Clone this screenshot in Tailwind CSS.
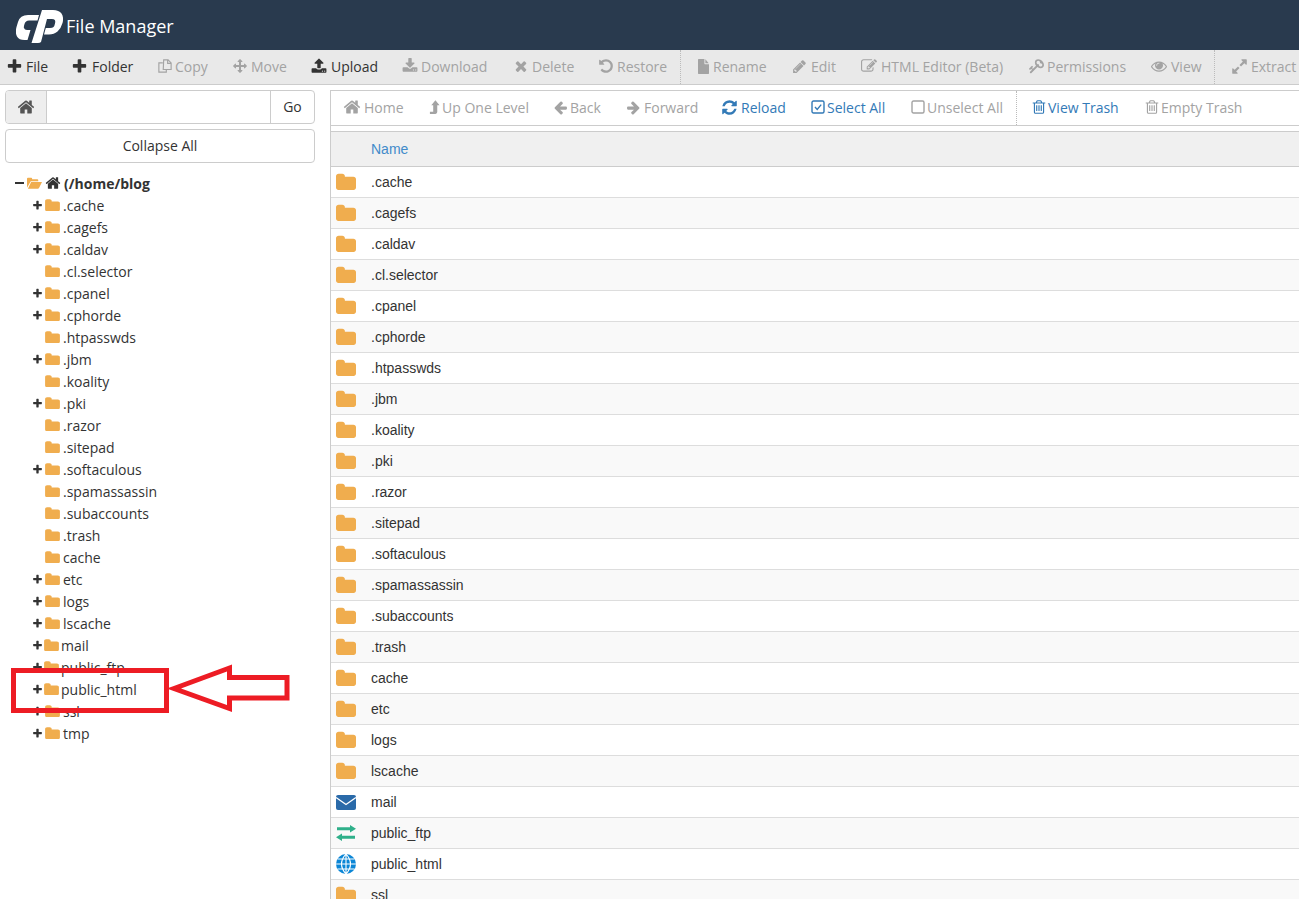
<!DOCTYPE html>
<html lang="en">
<head>
    <meta charset="UTF-8">
    <meta name="viewport" content="width=device-width, initial-scale=1.0">
    <title>cPanel File Manager</title>
    <script src="https://cdn.jsdelivr.net/npm/@tailwindcss/browser@4"></script>
</head>
<body class="bg-white h-[899px] overflow-hidden relative font-['Open_Sans','Noto_Sans',sans-serif] text-[14px] text-[#333]">
    <!-- Icon set -->
    <svg class="hidden">
        <symbol id="i-plus" viewBox="0 0 1792 1792"><path d="M1600 736v192q0 40-28 68t-68 28h-416v416q0 40-28 68t-68 28h-192q-40 0-68-28t-28-68v-416h-416q-40 0-68-28t-28-68v-192q0-40 28-68t68-28h416v-416q0-40 28-68t68-28h192q40 0 68 28t28 68v416h416q40 0 68 28t28 68z"/></symbol>
        <symbol id="i-folder" viewBox="0 0 1728 1400"><path d="M1728 508v704q0 92-66 158t-158 66h-1280q-92 0-158-66t-66-158v-960q0-92 66-158t158-66h320q92 0 158 66t66 158v32h736q92 0 158 66t66 158z"/></symbol>
        <symbol id="i-home" viewBox="0 0 1792 1792"><path d="M1472 992v480q0 26-19 45t-45 19h-384v-384h-256v384h-384q-26 0-45-19t-19-45v-480q0-1 .5-3t.5-3l575-474 575 474q1 2 1 6zm223-69l-62 74q-8 9-21 11h-3q-13 0-21-7l-692-577-692 577q-12 8-24 7-13-2-21-11l-62-74q-8-10-7-23.5t11-21.5l719-599q32-26 76-26t76 26l244 204v-195q0-14 9-23t23-9h192q14 0 23 9t9 23v408l219 182q10 8 11 21.5t-7 23.5z"/></symbol>
        <symbol id="i-left" viewBox="0 0 1792 1792"><path d="M1664 896v128q0 53-32.5 90.5t-84.5 37.5h-704l293 294q38 36 38 90t-38 90l-75 76q-38 38-90 38-53 0-91-38l-651-652q-37-37-37-90 0-52 37-91l651-650q38-38 91-38 52 0 90 38l75 74q38 38 38 91t-38 91l-293 293h704q52 0 84.5 37.5t32.5 90.5z"/></symbol>
        <symbol id="i-right" viewBox="0 0 1792 1792"><path d="M1600 960q0 54-37 91l-651 651q-39 37-91 37-51 0-90-37l-75-75q-38-38-38-91t38-91l293-293h-704q-52 0-84.5-37.5t-32.5-90.5v-128q0-53 32.5-90.5t84.5-37.5h704l-293-294q-38-36-38-90t38-90l75-75q38-38 90-38 53 0 91 38l651 651q37 35 37 90z"/></symbol>
        <symbol id="i-times" viewBox="0 0 1792 1792"><path d="M1490 1322q0 40-28 68l-136 136q-28 28-68 28t-68-28l-294-294-294 294q-28 28-68 28t-68-28l-136-136q-28-28-28-68t28-68l294-294-294-294q-28-28-28-68t28-68l136-136q28-28 68-28t68 28l294 294 294-294q28-28 68-28t68 28l136 136q28 28 28 68t-28 68l-294 294 294 294q28 28 28 68z"/></symbol>
        <symbol id="i-file" viewBox="128 0 1536 1792" preserveAspectRatio="none"><path d="M1152 512v-472q22 14 36 28l408 408q14 14 28 36h-472zm-128 32q0 40 28 68t68 28h544v1056q0 40-28 68t-68 28h-1344q-40 0-68-28t-28-68v-1600q0-40 28-68t68-28h800v544z"/></symbol>
        <symbol id="i-pencil" viewBox="0 0 1792 1792"><path d="M491 1536l91-91-235-235-91 91v107h128v128h107zm523-928q0-22-22-22-10 0-17 7l-542 542q-7 7-7 17 0 22 22 22 10 0 17-7l542-542q7-7 7-17zm-54-192l416 416-832 832h-416v-416zm683 96q0 53-37 90l-166 166-416-416 166-165q36-38 90-38 53 0 91 38l235 234q37 39 37 91z"/></symbol>
        <symbol id="i-edit" viewBox="0 0 1792 1792"><path d="M888 1184l116-116-152-152-116 116v56h96v96h56zm440-720q-16-16-33 1l-350 350q-17 17-1 33t33-1l350-350q17-17 1-33zm80 594v190q0 119-84.5 203.5t-203.5 84.5h-832q-119 0-203.5-84.5t-84.5-203.5v-832q0-119 84.5-203.5t203.5-84.5h832q63 0 117 25 15 7 18 23 3 17-9 29l-49 49q-14 14-32 8-23-6-45-6h-832q-66 0-113 47t-47 113v832q0 66 47 113t113 47h832q66 0 113-47t47-113v-126q0-13 9-22l64-64q15-15 35-7t20 29zm-96-738l288 288-672 672h-288v-288zm444 132l-92 92-288-288 92-92q28-28 68-28t68 28l152 152q28 28 28 68t-28 68z"/></symbol>
        <symbol id="i-refresh" viewBox="0 0 1792 1792"><path d="M1639 1056q0 5-1 7-64 268-268 434.5t-478 166.5q-146 0-282.5-55t-243.5-157l-129 129q-19 19-45 19t-45-19-19-45v-448q0-26 19-45t45-19h448q26 0 45 19t19 45-19 45l-137 137q71 66 161 102t187 36q134 0 250-65t186-179q11-17 53-117 8-23 30-23h192q13 0 22.5 9.5t9.5 22.5zm25-800v448q0 26-19 45t-45 19h-448q-26 0-45-19t-19-45 19-45l138-138q-148-137-349-137-134 0-250 65t-186 179q-11 17-53 117-8 23-30 23h-199q-13 0-22.5-9.5t-9.5-22.5v-7q65-268 270-434.5t480-166.5q146 0 284 55.5t245 156.5l130-129q19-19 45-19t45 19 19 45z"/></symbol>
        <symbol id="i-eye" viewBox="0 0 1792 1792"><path d="M1664 960q-152-236-381-353 61 104 61 225 0 185-131.5 316.5t-316.5 131.5-316.5-131.5-131.5-316.5q0-121 61-225-229 117-381 353 133 205 333.5 326.5t434.5 121.5 434.5-121.5 333.5-326.5zm-720-384q0-20-14-34t-34-14q-125 0-214.5 89.5t-89.5 214.5q0 20 14 34t34 14 34-14 14-34q0-86 61-147t147-61q20 0 34-14t14-34zm848 384q0 34-20 69-140 230-376.5 368.5t-499.5 138.5-499.5-139-376.5-368q-20-35-20-69t20-69q140-229 376.5-368t499.5-139 499.5 139 376.5 368q20 35 20 69z"/></symbol>
        <symbol id="i-key" viewBox="0 0 1792 1792"><path transform="matrix(-1 0 0 1 1792 0)" d="M832 512q0-80-56-136t-136-56-136 56-56 136q0 42 19 83-41-19-83-19-80 0-136 56t-56 136 56 136 136 56 136-56 56-136q0-42-19-83 41 19 83 19 80 0 136-56t56-136zm851 704q0 17-49 66t-66 49q-9 0-28.5-16t-36.5-33-38.5-40-24.5-26l-96 96 220 220q28 28 28 68 0 42-39 81t-81 39q-40 0-68-28l-671-671q-176 131-365 131-163 0-265.5-102.5t-102.5-265.5q0-160 95-313t248-248 313-95q163 0 265.5 102.5t102.5 265.5q0 189-131 365l355 355 96-96q-3-3-26-24.5t-40-38.5-33-36.5-16-28.5q0-17 49-66t66-49q13 0 23 10 6 6 46 44.5t82 79.5 86.5 86 73 78 28.5 41z"/></symbol>
        <symbol id="i-undo" viewBox="0 0 1792 1792"><path d="M1664 896q0 156-61 298t-164 245-245 164-298 61q-172 0-327-72.5t-264-204.5q-7-10-6.5-22.5t8.5-20.5l137-138q10-9 25-9 16 2 23 12 73 95 179 147t225 52q104 0 198.5-40.5t163.5-109.5 109.5-163.5 40.5-198.5-40.5-198.5-109.5-163.5-163.5-109.5-198.5-40.5q-98 0-188 35.5t-160 101.5l137 138q31 30 14 69-17 40-59 40h-448q-26 0-45-19t-19-45v-448q0-42 40-59 39-17 69 14l130 129q107-101 244.5-156.5t284.5-55.5q156 0 298 61t245 164 164 245 61 298z"/></symbol>
        <symbol id="i-move" viewBox="0 0 1792 1792"><path d="M1792 896q0 26-19 45l-256 256q-19 19-45 19t-45-19-19-45v-128h-384v384h128q26 0 45 19t19 45-19 45l-256 256q-19 19-45 19t-45-19l-256-256q-19-19-19-45t19-45 45-19h128v-384h-384v128q0 26-19 45t-45 19-45-19l-256-256q-19-19-19-45t19-45l256-256q19-19 45-19t45 19 19 45v128h384v-384h-128q-26 0-45-19t-19-45 19-45l256-256q19-19 45-19t45 19l256 256q19 19 19 45t-19 45-45 19h-128v384h384v-128q0-26 19-45t45-19 45 19l256 256q19 19 19 45z"/></symbol>
        <symbol id="i-upload" viewBox="0 0 1792 1792"><path d="M1344 1472q0-26-19-45t-45-19-45 19-19 45 19 45 45 19 45-19 19-45zm256 0q0-26-19-45t-45-19-45 19-19 45 19 45 45 19 45-19 19-45zm128-224v320q0 40-28 68t-68 28h-1472q-40 0-68-28t-28-68v-320q0-40 28-68t68-28h427q21 56 70.5 92t110.5 36h256q61 0 110.5-36t70.5-92h427q40 0 68 28t28 68zm-325-648q-17 40-59 40h-256v448q0 26-19 45t-45 19h-256q-26 0-45-19t-19-45v-448h-256q-42 0-59-40-17-39 14-69l448-448q18-19 45-19t45 19l448 448q31 30 14 69z"/></symbol>
        <symbol id="i-download" viewBox="0 0 1792 1792"><path d="M1344 1344q0-26-19-45t-45-19-45 19-19 45 19 45 45 19 45-19 19-45zm256 0q0-26-19-45t-45-19-45 19-19 45 19 45 45 19 45-19 19-45zm128-224v320q0 40-28 68t-68 28h-1472q-40 0-68-28t-28-68v-320q0-40 28-68t68-28h465l135 136q58 56 136 56t136-56l136-136h464q40 0 68 28t28 68zm-325-569q17 41-14 70l-448 448q-18 19-45 19t-45-19l-448-448q-31-29-14-70 17-39 59-39h256v-448q0-26 19-45t45-19h256q26 0 45 19t19 45v448h256q42 0 59 39z"/></symbol>
        <symbol id="i-trash" viewBox="0 0 1792 1792"><path d="M704 736v576q0 14-9 23t-23 9h-64q-14 0-23-9t-9-23v-576q0-14 9-23t23-9h64q14 0 23 9t9 23zm256 0v576q0 14-9 23t-23 9h-64q-14 0-23-9t-9-23v-576q0-14 9-23t23-9h64q14 0 23 9t9 23zm256 0v576q0 14-9 23t-23 9h-64q-14 0-23-9t-9-23v-576q0-14 9-23t23-9h64q14 0 23 9t9 23zm128 724v-948h-896v948q0 22 7 40.5t14.5 27 10.5 8.5h832q3 0 10.5-8.5t14.5-27 7-40.5zm-672-1076h448l-48-117q-7-9-17-11h-317q-10 2-17 11zm928 32v64q0 14-9 23t-23 9h-96v948q0 83-47 143.5t-113 60.5h-832q-66 0-113-58.5t-47-141.5v-952h-96q-14 0-23-9t-9-23v-64q0-14 9-23t23-9h309l70-167q15-37 54-63t79-26h320q40 0 79 26t54 63l70 167h309q14 0 23 9t9 23z"/></symbol>
        <symbol id="i-expand" viewBox="0 0 1792 1792"><path d="M883 1056q0 13-10 23l-332 332 144 144q19 19 19 45t-19 45-45 19h-448q-26 0-45-19t-19-45v-448q0-26 19-45t45-19 45 19l144 144 332-332q10-10 23-10t23 10l114 114q10 10 10 23zm781-864v448q0 26-19 45t-45 19-45-19l-144-144-332 332q-10 10-23 10t-23-10l-114-114q-10-10-10-23t10-23l332-332-144-144q-19-19-19-45t19-45 45-19h448q26 0 45 19t19 45z"/></symbol>
        <symbol id="i-copy" viewBox="0 0 16 16"><path fill="none" stroke="currentColor" stroke-width="1.300" d="M6.500 1h5l3.500 3.500v7.500h-9zM11 1v4h4M5.500 4.500H1v10.500h8.500v-3"/></symbol>
        <symbol id="i-up" viewBox="0 0 12 16"><path d="M7 0l4.500 5.500H9V13q0 2-2 2H1v-2.300h3.600V5.500H2.500z"/></symbol>
        <symbol id="i-check" viewBox="0 0 14 14"><rect x="1" y="1" width="12" height="12" rx="1.500" fill="none" stroke="currentColor" stroke-width="1.400"/><path d="M4 7l2.200 2.400L10.200 4.600" fill="none" stroke="currentColor" stroke-width="1.400"/></symbol>
        <symbol id="i-square" viewBox="0 0 14 14"><rect x="1" y="1" width="12" height="12" rx="1.500" fill="none" stroke="currentColor" stroke-width="1.400"/></symbol>
        <symbol id="i-open" viewBox="0 0 16 12"><path d="M0 11V1.500Q0 .5 1 .5h3.500q1 0 1 1V2H11q1 0 1 1v1H4L0 11zM1 12l3.400-7H16l-3.200 6.200q-.4.800-1.300.8z"/></symbol>
    </svg>

    <!-- Header -->
    <header class="h-[50px] bg-[#293a4e] flex items-center pl-[16px]">
        <svg class="w-[47px] h-[34px] mr-[3px] mt-[1px] text-white" viewBox="0 0 47 34" fill="currentColor">
            <path d="M12 6h11l-1.500 5.500H13q-3.500 0-4.500 3.500t-.5 4q.5 2 3 2h3.500L11.500 31H8.500Q3 31 1 27.500T.5 18l1.500-5Q4 6 12 6z"/>
            <path d="M26 1h11q6 0 8.500 3.500t1 9.500q-1.500 5.500-5 8.500T33 25.500h-5l1.800-6.500H34q2.500 0 3.500-1t1.500-3.500q.6-2.500-.2-3.500t-3-1h-4.800L25 33q-1 1-3 1h-6.500z"/>
        </svg>
        <span class="text-[18px] text-white mt-[2px]">File Manager</span>
    </header>

    <!-- Main toolbar -->
    <div class="h-[35px] bg-[#e9e9e9] border-b border-[#ccc] flex items-center pl-[8px] whitespace-nowrap overflow-hidden text-[#a3a3a3]">
        <div class="flex items-center h-full pb-[2px]">
            <a class="flex items-center w-[65px] text-[#333]"><span class="flex w-[18px]"><svg class="w-[17px] h-[17px] -ml-[2px] fill-current"><use href="#i-plus"/></svg></span>File</a>
            <a class="flex items-center w-[85px] text-[#333]"><span class="flex w-[19px]"><svg class="w-[17px] h-[17px] -ml-[2px] fill-current"><use href="#i-plus"/></svg></span>Folder</a>
            <a class="flex items-center w-[75px]"><span class="flex w-[17px]"><svg class="w-[14px] h-[14px]"><use href="#i-copy"/></svg></span>Copy</a>
            <a class="flex items-center w-[79px]"><span class="flex w-[18px]"><svg class="w-[14px] h-[14px] fill-current"><use href="#i-move"/></svg></span>Move</a>
            <a class="flex items-center w-[91px] text-[#333]"><span class="flex w-[19px]"><svg class="w-[16px] h-[16px] -ml-[1px] fill-current"><use href="#i-upload"/></svg></span>Upload</a>
            <a class="flex items-center w-[111px]"><span class="flex w-[18px]"><svg class="w-[16px] h-[16px] -ml-[1px] fill-current"><use href="#i-download"/></svg></span>Download</a>
            <a class="flex items-center w-[85px]"><span class="flex w-[18px]"><svg class="w-[16px] h-[16px] -ml-[1px] fill-current"><use href="#i-times"/></svg></span>Delete</a>
            <a class="flex items-center w-[81px]"><span class="flex w-[18px]"><svg class="w-[16px] h-[16px] -ml-[1px] fill-current"><use href="#i-undo"/></svg></span>Restore</a>
        </div>
        <div class="flex items-center h-full pb-[2px] pl-[16px] border-l border-dotted border-[#bbb]">
            <a class="flex items-center w-[96px]"><span class="flex w-[16px]"><svg class="w-[11px] h-[15px] ml-[1px] fill-current"><use href="#i-file"/></svg></span>Rename</a>
            <a class="flex items-center w-[68px]"><span class="flex w-[18px]"><svg class="w-[15px] h-[15px] -ml-[1px] fill-current"><use href="#i-pencil"/></svg></span>Edit</a>
            <a class="flex items-center w-[168px]"><span class="flex w-[20px]"><svg class="w-[16px] h-[16px] fill-current"><use href="#i-edit"/></svg></span>HTML Editor (Beta)</a>
            <a class="flex items-center w-[122px]"><span class="flex w-[18px]"><svg class="w-[16px] h-[16px] -ml-[1px] fill-current"><use href="#i-key"/></svg></span>Permissions</a>
            <a class="flex items-center w-[63px]"><span class="flex w-[20px]"><svg class="w-[16px] h-[16px] fill-current"><use href="#i-eye"/></svg></span>View</a>
        </div>
        <div class="flex items-center h-full pb-[2px] pl-[17px] border-l border-dotted border-[#bbb]">
            <a class="flex items-center"><span class="flex w-[19px]"><svg class="w-[17px] h-[17px] -ml-[1px] fill-current"><use href="#i-expand"/></svg></span>Extract</a>
        </div>
    </div>

    <div class="flex">
        <!-- Left column: path box and directory tree -->
        <aside class="w-[330px] shrink-0 pl-[5px] pr-[15px] pt-[5px]">
            <div class="flex h-[34px] border border-[#ccc] rounded-[4px] overflow-hidden">
                <div class="w-[41px] bg-[#eee] border-r border-[#ccc] flex items-center justify-center"><svg class="w-[18px] h-[18px] fill-[#555]"><use href="#i-home"/></svg></div>
                <input class="flex-1 min-w-0 bg-white" type="text">
                <div class="w-[44px] border-l border-[#ccc] flex items-center justify-center pb-[2px]">Go</div>
            </div>
            <button class="block w-full h-[34px] mt-[5px] pb-[2px] border border-[#ccc] rounded-[4px] bg-white text-center">Collapse All</button>
            <div id="tree" class="mt-[9px] -ml-[5px]">
                <div class="flex items-center h-[22px] pl-[15px] font-bold">
                    <span class="w-[9px] h-[2px] bg-[#333] mr-[3px]"></span>
                    <svg class="w-[15px] h-[12px] fill-[#f0ad4e] mr-[3px]"><use href="#i-open"/></svg>
                    <svg class="w-[16px] h-[16px] fill-[#333] mr-[3px]"><use href="#i-home"/></svg>
                    (/home/blog
                </div>
            </div>
        </aside>

        <!-- Right column: listing -->
        <main class="flex-1 min-w-0 border-l border-[#ccc] mt-[5px]">
            <div class="h-[36px] border-y border-[#ccc] flex items-center pl-[13px] whitespace-nowrap text-[#a3a3a3]">
                <div class="flex items-center h-full pb-[2px]">
                    <a class="flex items-center w-[85px]"><span class="flex w-[20px]"><svg class="w-[18px] h-[18px] -ml-[1px] fill-current"><use href="#i-home"/></svg></span>Home</a>
                    <a class="flex items-center w-[125px]"><span class="flex w-[13px]"><svg class="w-[11px] h-[15px] fill-current"><use href="#i-up"/></svg></span>Up One Level</a>
                    <a class="flex items-center w-[73px]"><span class="flex w-[16px]"><svg class="w-[15px] h-[15px] -ml-[1px] fill-current"><use href="#i-left"/></svg></span>Back</a>
                    <a class="flex items-center w-[95px]"><span class="flex w-[17px]"><svg class="w-[15px] h-[15px] -ml-[1px] fill-current"><use href="#i-right"/></svg></span>Forward</a>
                    <a class="flex items-center w-[89px] text-[#337ab7]"><span class="flex w-[19px]"><svg class="w-[17px] h-[17px] -ml-[1px] fill-current"><use href="#i-refresh"/></svg></span>Reload</a>
                    <a class="flex items-center w-[100px] text-[#337ab7]"><span class="flex w-[16px]"><svg class="w-[14px] h-[14px]"><use href="#i-check"/></svg></span>Select All</a>
                    <a class="flex items-center w-[105px]"><span class="flex w-[16px]"><svg class="w-[14px] h-[14px]"><use href="#i-square"/></svg></span>Unselect All</a>
                </div>
                <div class="flex items-center h-full pb-[2px] pl-[15px] border-l border-dotted border-[#bbb]">
                    <a class="flex items-center w-[113px] text-[#337ab7]"><span class="flex w-[16px]"><svg class="w-[16px] h-[16px] -ml-[1px] fill-current"><use href="#i-trash"/></svg></span>View Trash</a>
                    <a class="flex items-center"><span class="flex w-[16px]"><svg class="w-[16px] h-[16px] -ml-[1px] fill-current"><use href="#i-trash"/></svg></span>Empty Trash</a>
                </div>
            </div>
            <div class="h-[36px] mt-[5px] bg-[#f0f0f0] border-y border-[#ccc] flex items-center pl-[40px] font-['Liberation_Sans',Arial,sans-serif] text-[#428bca]">Name</div>
            <div id="rows" class="font-['Liberation_Sans',Arial,sans-serif]"></div>
        </main>
    </div>

    <!-- Red annotation over the tree -->
    <div class="absolute left-[11px] top-[668px] w-[158px] h-[45px] border-[5px] border-[#ed1c24]"></div>
    <svg class="absolute left-[165px] top-[660px] w-[130px] h-[56px]" viewBox="165 660 130 56">
        <path d="M174 688.500L229.500 668V677.500H287V698H229.500V708.500Z" fill="none" stroke="#ed1c24" stroke-width="5"/>
    </svg>

    <script>
        // [name, has children, shifted left]
        const treeItems = [
            ['.cache', 1], ['.cagefs', 1], ['.caldav', 1], ['.cl.selector', 0], ['.cpanel', 1], ['.cphorde', 1],
            ['.htpasswds', 0], ['.jbm', 1], ['.koality', 0], ['.pki', 1], ['.razor', 0], ['.sitepad', 0],
            ['.softaculous', 1], ['.spamassassin', 0], ['.subaccounts', 0], ['.trash', 0], ['cache', 0],
            ['etc', 1], ['logs', 1], ['lscache', 1], ['mail', 1, 1], ['public_ftp', 1, 1], ['public_html', 1, 1],
            ['ssl', 1], ['tmp', 1]
        ];
        const tree = document.getElementById('tree');
        treeItems.forEach(([name, kids, tight]) => {
            const plus = kids ? '<svg class="w-[11px] h-[11px] fill-[#333]"><use href="#i-plus"/></svg>' : '';
            tree.insertAdjacentHTML('beforeend', `
                <div class="flex items-center h-[22px] pl-[32px]">
                    <span class="w-[12px] flex">${plus}</span>
                    <svg class="${tight ? 'w-[15px] h-[12px] mr-[2px]' : 'w-[15px] h-[12px] mr-[3px] ml-[1px]'} fill-[#f0ad4e]"><use href="#i-folder"/></svg>
                    ${name}
                </div>`);
        });

        const icons = {
            mail: '<svg class="w-[20px] h-[15px]" viewBox="0 0 20 15"><rect width="20" height="15" rx="2" fill="#2a6aa9"/><path d="M0 2.500L10 9.500L20 2.500" fill="none" stroke="#fff" stroke-width="1.400"/></svg>',
            public_ftp: '<svg class="w-[20px] h-[16px]" viewBox="0 0 20 16" fill="#2fb08a"><path d="M14 0l6 3.800-6 3.800V5.300H1V2.300h13zM6 8.400v2.300h13v3H6V16l-6-3.800z"/></svg>',
            public_html: '<svg class="w-[20px] h-[20px]" viewBox="0 0 20 20"><circle cx="10" cy="10" r="10" fill="#0b86d6"/><path d="M10 0v20M0 10h20M1.500 5h17M1.500 15h17M10 0q-9 10 0 20M10 0q9 10 0 20" fill="none" stroke="#fff" stroke-width="1.100"/></svg>'
        };
        const folder = '<svg class="w-[20px] h-[17px] -mt-[2px] fill-[#f0ad4e]"><use href="#i-folder"/></svg>';
        const names = ['.cache', '.cagefs', '.caldav', '.cl.selector', '.cpanel', '.cphorde', '.htpasswds', '.jbm', '.koality', '.pki', '.razor', '.sitepad', '.softaculous', '.spamassassin', '.subaccounts', '.trash', 'cache', 'etc', 'logs', 'lscache', 'mail', 'public_ftp', 'public_html', 'ssl'];
        const rows = document.getElementById('rows');
        names.forEach((name, i) => {
            rows.insertAdjacentHTML('beforeend', `
                <div class="flex items-center h-[31px] border-b border-[#ddd] ${i % 2 ? 'bg-[#f9f9f9]' : 'bg-white'}">
                    <span class="w-[40px] pl-[5px] flex items-center">${icons[name] || folder}</span>
                    ${name}
                </div>`);
        });
    </script>
</body>
</html>
